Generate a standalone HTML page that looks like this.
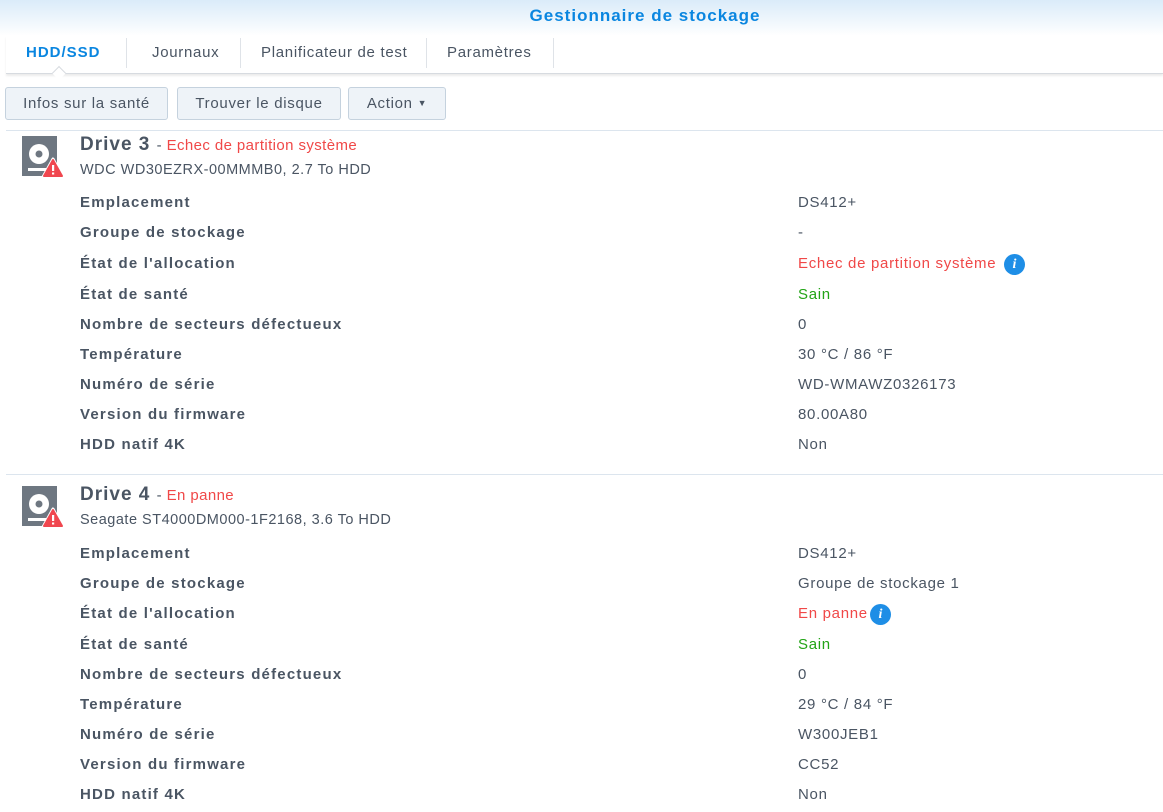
<!DOCTYPE html>
<html><head><meta charset="utf-8"><style>
*{margin:0;padding:0;box-sizing:border-box}
body{width:1163px;height:812px;overflow:hidden;background:#fff;font-family:"Liberation Sans",Arial,sans-serif;position:relative;color:#4a5563;letter-spacing:0.7px}
.hdr{position:absolute;left:0;top:0;width:1163px;height:36px;background:linear-gradient(#daebf9,#fff)}
.title{position:absolute;top:6px;left:0;width:1290px;text-align:center;font-weight:bold;font-size:17px;color:#0a86e0;letter-spacing:1px}
.tabs{position:absolute;left:6px;top:36px;width:1157px;height:38px;border-bottom:1px solid #d7dbe0;box-shadow:0 2px 2px rgba(0,0,0,0.08)}
.tab{position:absolute;top:8px;font-size:15px;color:#4a5563}
.sep{position:absolute;top:2px;width:1px;height:30px;background:#dfe3e8}
.btn{position:absolute;top:87px;height:33px;border:1px solid #c5d2de;border-radius:3px;background:#eef3f8;font-size:15px;color:#4a5563;text-align:center;line-height:31px}
.hr{position:absolute;left:6px;width:1157px;height:1px;background:#dce5ee}
.t{position:absolute;font-size:15px;white-space:nowrap;line-height:18px}
.l{left:80px;font-weight:bold;letter-spacing:1.2px}
.v{left:798px}
.red{color:#f04848}
.grn{color:#22a416}
.dt{position:absolute;left:80px;font-size:19px;font-weight:bold;white-space:nowrap;letter-spacing:1px}
.dt span{font-size:15px;font-weight:normal;letter-spacing:0.4px}
.info{position:absolute;top:-1px;width:21px;height:21px;border-radius:50%;background:#1e8ee6;color:#fff;font:italic bold 14px "Liberation Serif",serif;text-align:center;line-height:21px;letter-spacing:0}
</style></head><body>
<div class="hdr"></div>
<div class="title">Gestionnaire de stockage</div>
<div class="tabs">
<div class="tab" style="left:20px;font-weight:bold;color:#0a86e0;letter-spacing:1px">HDD/SSD</div>
<div class="sep" style="left:120px"></div>
<div class="tab" style="left:146px">Journaux</div>
<div class="sep" style="left:234px"></div>
<div class="tab" style="left:255px">Planificateur de test</div>
<div class="sep" style="left:420px"></div>
<div class="tab" style="left:441px">Paramètres</div>
<div class="sep" style="left:547px"></div>
<div style="position:absolute;left:48px;top:32px;width:10px;height:10px;background:#fff;border-left:1px solid #d7dbe0;border-top:1px solid #d7dbe0;transform:rotate(45deg)"></div>
</div>
<div class="btn" style="left:5px;width:163px">Infos sur la santé</div>
<div class="btn" style="left:177px;width:164px">Trouver le disque</div>
<div class="btn" style="left:348px;width:98px">Action <span style="font-size:9px;vertical-align:2px">▼</span></div>
<div class="hr" style="top:130px"></div>

<svg style="position:absolute;left:20px;top:135px" width="45" height="45" viewBox="0 0 45 45">
<rect x="2" y="1" width="35" height="40" fill="#6e7781"/>
<circle cx="19" cy="19" r="10" fill="#fff"/><circle cx="19" cy="19" r="3.5" fill="#6e7781"/>
<rect x="8" y="33" width="18" height="3" fill="#fff"/>
<path d="M33 24 L43 42 L23 42 Z" fill="#fff" stroke="#fff" stroke-width="3" stroke-linejoin="round"/>
<path d="M33 25 L42 41 L24 41 Z" fill="#f0474f" stroke="#f0474f" stroke-width="2" stroke-linejoin="round"/>
<rect x="32" y="30" width="2.2" height="6" fill="#fff"/><rect x="32" y="37.5" width="2.2" height="2" fill="#fff"/>
</svg>
<div class="dt" style="top:134px">Drive 3 <span>- <span class="red">Echec de partition système</span></span></div>
<div class="t" style="left:80px;top:161px;font-size:14.5px;letter-spacing:0.5px">WDC WD30EZRX-00MMMB0, 2.7 To HDD</div>
<div class="t l" style="top:194px">Emplacement</div><div class="t v" style="top:194px">DS412+</div>
<div class="t l" style="top:224px">Groupe de stockage</div><div class="t v" style="top:224px">-</div>
<div class="t l" style="top:255px">État de l'allocation</div><div class="t v" style="top:255px"><span class="red">Echec de partition système</span><span class="info" style="left:206px">i</span></div>
<div class="t l" style="top:286px">État de santé</div><div class="t v grn" style="top:286px">Sain</div>
<div class="t l" style="top:316px">Nombre de secteurs défectueux</div><div class="t v" style="top:316px">0</div>
<div class="t l" style="top:346px">Température</div><div class="t v" style="top:346px">30 °C / 86 °F</div>
<div class="t l" style="top:376px">Numéro de série</div><div class="t v" style="top:376px">WD-WMAWZ0326173</div>
<div class="t l" style="top:406px">Version du firmware</div><div class="t v" style="top:406px">80.00A80</div>
<div class="t l" style="top:436px">HDD natif 4K</div><div class="t v" style="top:436px">Non</div>
<div class="hr" style="top:474px"></div>

<svg style="position:absolute;left:20px;top:485px" width="45" height="45" viewBox="0 0 45 45">
<rect x="2" y="1" width="35" height="40" fill="#6e7781"/>
<circle cx="19" cy="19" r="10" fill="#fff"/><circle cx="19" cy="19" r="3.5" fill="#6e7781"/>
<rect x="8" y="33" width="18" height="3" fill="#fff"/>
<path d="M33 24 L43 42 L23 42 Z" fill="#fff" stroke="#fff" stroke-width="3" stroke-linejoin="round"/>
<path d="M33 25 L42 41 L24 41 Z" fill="#f0474f" stroke="#f0474f" stroke-width="2" stroke-linejoin="round"/>
<rect x="32" y="30" width="2.2" height="6" fill="#fff"/><rect x="32" y="37.5" width="2.2" height="2" fill="#fff"/>
</svg>
<div class="dt" style="top:484px">Drive 4 <span>- <span class="red">En panne</span></span></div>
<div class="t" style="left:80px;top:511px;font-size:14.5px;letter-spacing:0.5px">Seagate ST4000DM000-1F2168, 3.6 To HDD</div>
<div class="t l" style="top:545px">Emplacement</div><div class="t v" style="top:545px">DS412+</div>
<div class="t l" style="top:575px">Groupe de stockage</div><div class="t v" style="top:575px">Groupe de stockage 1</div>
<div class="t l" style="top:605px">État de l'allocation</div><div class="t v" style="top:605px"><span class="red">En panne</span><span class="info" style="left:72px">i</span></div>
<div class="t l" style="top:636px">État de santé</div><div class="t v grn" style="top:636px">Sain</div>
<div class="t l" style="top:666px">Nombre de secteurs défectueux</div><div class="t v" style="top:666px">0</div>
<div class="t l" style="top:696px">Température</div><div class="t v" style="top:696px">29 °C / 84 °F</div>
<div class="t l" style="top:726px">Numéro de série</div><div class="t v" style="top:726px">W300JEB1</div>
<div class="t l" style="top:756px">Version du firmware</div><div class="t v" style="top:756px">CC52</div>
<div class="t l" style="top:786px">HDD natif 4K</div><div class="t v" style="top:786px">Non</div>
</body></html>
